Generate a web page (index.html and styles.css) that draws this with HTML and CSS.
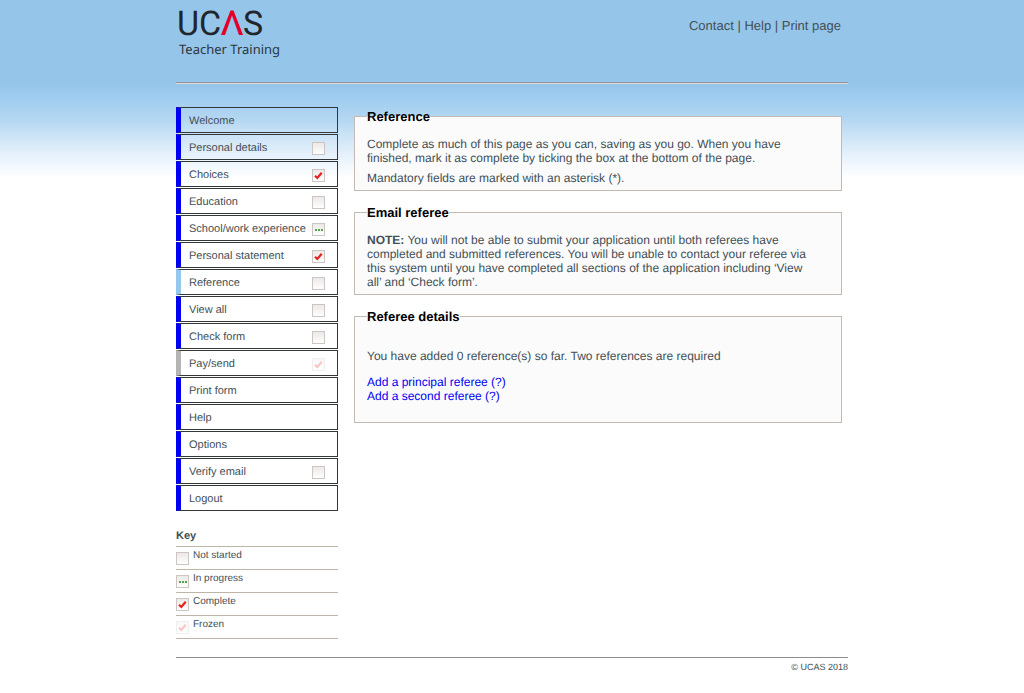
FILE: index.html
```html
<!DOCTYPE html>
<html lang="en">
<head>
<meta charset="utf-8">
<meta name="viewport" content="width=device-width, initial-scale=1">
<title>UCAS Teacher Training - Reference</title>
<link rel="stylesheet" href="styles.css">
</head>
<body>
<svg class="defs" aria-hidden="true">
  <defs>
    <linearGradient id="box-fill" x1="0" y1="0" x2="0" y2="1">
      <stop offset="0" stop-color="#ebe8e6"/>
      <stop offset="1" stop-color="#ffffff"/>
    </linearGradient>
    <symbol id="empty" viewBox="0 0 13 13">
      <rect x="0.5" y="0.5" width="12" height="12" fill="url(#box-fill)" stroke="#cdc5c1"/>
    </symbol>
    <symbol id="progress" viewBox="0 0 13 13">
      <use href="#empty"/>
      <path d="M3 6h2v2H3zM6 6h2v2H6zM9 6h2v2H9z" fill="#4cab46"/>
    </symbol>
    <symbol id="done" viewBox="0 0 13 13">
      <use href="#empty"/>
      <path d="M3 6.800L5.300 9L9.700 3.800" fill="none" stroke="#ea2020" stroke-width="2.200"/>
    </symbol>
  </defs>
</svg>
<div class="page">
  <header class="header">
    <svg class="logo" viewBox="0 0 116 60" role="img" aria-label="UCAS Teacher Training">
      <g class="logo-name">
        <text x="1" y="35">U</text>
        <text x="23" y="35">C</text>
        <text x="67" y="35">S</text>
      </g>
      <path d="M45 35L54.500 10.500H57.500L67 35H63L56 15.500L49 35Z" fill="#e4002b"/>
      <text class="logo-sub" x="3" y="54">Teacher Training</text>
    </svg>
    <nav class="top-links"><a href="#">Contact</a> | <a href="#">Help</a> | <a href="#">Print page</a></nav>
  </header>
  <div class="columns">
    <aside class="sidebar">
      <nav class="menu">
        <a href="#">Welcome</a>
        <a href="#">Personal details <svg class="status"><use href="#empty"/></svg></a>
        <a href="#">Choices <svg class="status"><use href="#done"/></svg></a>
        <a href="#">Education <svg class="status"><use href="#empty"/></svg></a>
        <a href="#">School/work experience <svg class="status"><use href="#progress"/></svg></a>
        <a href="#">Personal statement <svg class="status"><use href="#done"/></svg></a>
        <a href="#" class="current" aria-current="page">Reference <svg class="status"><use href="#empty"/></svg></a>
        <a href="#">View all <svg class="status"><use href="#empty"/></svg></a>
        <a href="#">Check form <svg class="status"><use href="#empty"/></svg></a>
        <a href="#" class="locked">Pay/send <svg class="status frozen"><use href="#done"/></svg></a>
        <a href="#">Print form</a>
        <a href="#">Help</a>
        <a href="#">Options</a>
        <a href="#">Verify email <svg class="status"><use href="#empty"/></svg></a>
        <a href="#">Logout</a>
      </nav>
      <h2 class="key-title">Key</h2>
      <ul class="key">
        <li><svg class="status"><use href="#empty"/></svg><span>Not started</span></li>
        <li><svg class="status"><use href="#progress"/></svg><span>In progress</span></li>
        <li><svg class="status"><use href="#done"/></svg><span>Complete</span></li>
        <li><svg class="status frozen"><use href="#done"/></svg><span>Frozen</span></li>
      </ul>
    </aside>
    <main class="content">
      <fieldset class="panel">
        <legend>Reference</legend>
        <p>Complete as much of this page as you can, saving as you go. When you have finished, mark it as complete by ticking the box at the bottom of the page.</p>
        <p>Mandatory fields are marked with an asterisk (*).</p>
      </fieldset>
      <fieldset class="panel">
        <legend>Email referee</legend>
        <p><strong>NOTE:</strong> You will not be able to submit your application until both referees have completed and submitted references. You will be unable to contact your referee via this system until you have completed all sections of the application including ‘View all’ and ‘Check form’.</p>
      </fieldset>
      <fieldset class="panel details">
        <legend>Referee details</legend>
        <p>You have added 0 reference(s) so far. Two references are required</p>
        <div class="actions">
          <a href="#">Add a principal referee (?)</a>
          <a href="#">Add a second referee (?)</a>
        </div>
      </fieldset>
    </main>
  </div>
  <footer class="footer">© UCAS 2018</footer>
</div>
</body>
</html>
```
FILE: styles.css
```css
* {
  box-sizing: border-box;
}

body {
  margin: 0;
  background: #fff linear-gradient(#96c5ea 0, #96c5ea 84px, #a1cef0 100px, #b5d7f1 120px, #cbe3f6 135px, #e1eefa 151px, #f3f9fe 167px, #fff 179px) no-repeat;
  color: #434f56;
  font: 13px/14px "Liberation Sans", Arial, sans-serif;
  text-rendering: geometricPrecision;
}

a {
  color: inherit;
  text-decoration: none;
}

.defs {
  position: absolute;
  width: 0;
  height: 0;
}

.page {
  max-width: 672px;
  margin: 0 auto;
}

.header {
  display: flex;
  justify-content: space-between;
  align-items: flex-start;
  padding: 0 7px 23px 0;
  border-bottom: 1px solid #e3d9d3;
  box-shadow: inset 0 -1px #8f979d;
}

.logo {
  width: 116px;
  height: 60px;
}

.logo-name {
  font: 34px Roboto, sans-serif;
  fill: #20262a;
}

.logo-sub {
  font: 13px "Noto Sans", sans-serif;
  fill: #2c373f;
}

.top-links {
  padding-top: 19px;
}

.columns {
  display: flex;
  gap: 16px;
  padding: 23px 6px 18px 0;
}

.sidebar {
  flex: 0 0 162px;
}

.menu {
  display: grid;
  gap: 1px;
  font-size: 11px;
}

.menu a {
  display: flex;
  justify-content: space-between;
  align-items: center;
  height: 26px;
  padding: 1px 12px 0 8px;
  border: 1px solid #33373a;
  border-left: 5px solid #0000f5;
}

.menu .current {
  border-left-color: #96c8ee;
}

.menu .locked {
  border-left-color: #b5b5b5;
}

.status {
  flex: none;
  width: 13px;
  height: 13px;
}

.menu .status {
  margin-top: 2px;
}

.frozen {
  opacity: 0.25;
}

.key-title {
  margin: 18px 0 3px;
  font-size: 11px;
  line-height: 14px;
}

.key {
  margin: 0;
  padding: 0;
  border-top: 1px solid #bdb5a9;
  list-style: none;
  font-size: 10px;
}

.key li {
  display: flex;
  gap: 4px;
  height: 23px;
  padding-top: 2px;
  border-bottom: 1px solid #bdb5a9;
}

.key .status {
  margin-top: 3px;
}

.content {
  flex: 1;
  min-width: 0;
}

.panel {
  min-width: 0;
  margin: 1px 0 13px;
  padding: 13px 24px 5px 12px;
  border: 1px solid #c3bbb3;
  background: #fbfbfb;
  font-size: 12px;
}

.panel legend {
  padding: 2px 0 0;
  color: #000;
  font-size: 13px;
  font-weight: bold;
}

.panel p {
  margin: 0 0 6px;
}

.panel p:last-child {
  margin-bottom: 0;
}

.details {
  padding: 25px 12px 19px;
}

.details p {
  margin-bottom: 12px;
}

.actions {
  display: grid;
  justify-items: start;
  color: #0000f5;
}

.footer {
  padding-top: 2px;
  border-top: 1px solid #8c8c8c;
  font-size: 9px;
  text-align: right;
}
```
